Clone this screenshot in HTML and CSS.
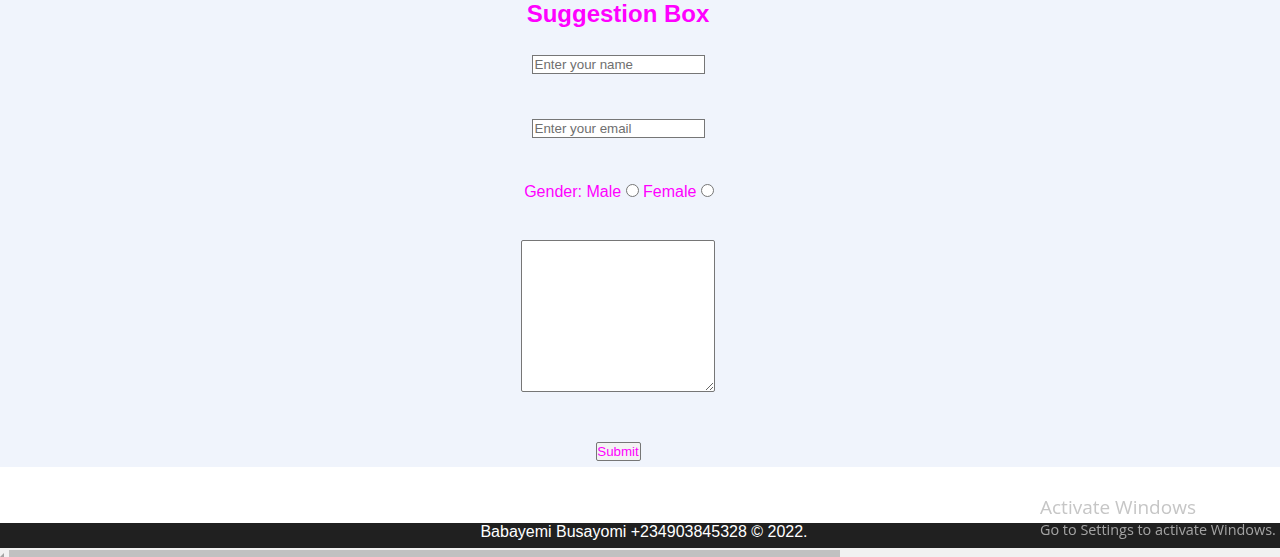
FILE: index.html
```html
<!DOCTYPE html>
<html lang="en">
<head>
<meta charset="utf-8">
<title>Suggestion Box</title>
<link rel="stylesheet" href="styles.css">
</head>
<body>
<main class="main">
  <form class="form">
    <h2 class="title">Suggestion Box</h2>
    <input class="field field-first" type="text" placeholder="Enter your name">
    <input class="field field-second" type="email" placeholder="Enter your email">
    <div class="gender">Gender: Male <span class="radio"></span> Female <span class="radio"></span></div>
    <textarea class="message"></textarea>
    <button class="submit" type="button">Submit</button>
  </form>
</main>
<div class="gap"></div>
<footer class="footer">Babayemi Busayomi +234903845328 © 2022.</footer>
<div class="scrollbar">
  <span class="arrow"></span>
  <span class="thumb"></span>
</div>
<div class="watermark">
  <div class="wm-title">Activate Windows</div>
  <div class="wm-sub">Go to Settings to activate Windows.</div>
</div>
</body>
</html>
```
FILE: styles.css
```css
html, body {
  margin: 0;
  padding: 0;
}
body {
  font-family: "Liberation Sans", Arial, sans-serif;
  background: #ffffff;
  height: 557px;
  overflow: hidden;
}
.main {
  background: #f0f4fc;
  height: 467px;
}
.form {
  width: 1236px;
  display: flex;
  flex-direction: column;
  align-items: center;
}
.title {
  margin: 0;
  font-size: 24px;
  line-height: 28px;
  font-weight: bold;
  color: #ff00ff;
}
.field {
  box-sizing: border-box;
  width: 173px;
  height: 19px;
  border: 1px solid #767676;
  background: #ffffff;
  padding: 0 2px;
  font-family: "Liberation Sans", Arial, sans-serif;
  font-size: 13.333px;
  margin: 0;
  outline: none;
}
.field::placeholder {
  color: #6f6f6f;
}
.field-first {
  margin-top: 27px;
}
.field-second {
  margin-top: 45px;
}
.gender {
  margin-top: 45px;
  margin-left: 2px;
  font-size: 16px;
  line-height: 18px;
  color: #ff00ff;
  display: flex;
  align-items: center;
  white-space: pre;
}
.radio {
  display: inline-block;
  box-sizing: border-box;
  width: 13px;
  height: 13px;
  border: 1px solid #767676;
  border-radius: 50%;
  background: #ffffff;
  margin: -3px 0 0 0;
}
.message {
  box-sizing: border-box;
  margin-top: 39px;
  width: 194px;
  height: 152px;
  border: 1px solid #767676;
  border-radius: 2px;
  background: #ffffff;
  resize: both;
  outline: none;
}
.submit {
  box-sizing: border-box;
  margin-top: 50px;
  height: 19px;
  width: 45px;
  padding: 0;
  border: 1px solid #767676;
  border-radius: 2px;
  background: #f3f3f3;
  color: #ff00ff;
  font-family: "Liberation Sans", Arial, sans-serif;
  font-size: 13.333px;
  line-height: 17px;
}
.gap {
  height: 56px;
}
.footer {
  height: 25px;
  background: #202020;
  color: #ffffff;
  font-size: 16px;
  line-height: 17px;
  text-align: center;
  padding-left: 8px;
  box-sizing: border-box;
}
.scrollbar {
  height: 9px;
  background: #f1f1f1;
  display: flex;
  align-items: flex-start;
}
.arrow {
  width: 0;
  height: 0;
  margin: 5px 0 0 0;
  border-top: 4px solid transparent;
  border-right: 4px solid #a3a3a3;
  border-bottom: 0 solid transparent;
}
.thumb {
  margin-left: 5px;
  margin-top: 2px;
  width: 831px;
  height: 7px;
  background: #c1c1c1;
}
.watermark {
  position: fixed;
  left: 1040px;
  top: 494px;
  font-family: "Open Sans", "Noto Sans", sans-serif;
  pointer-events: none;
}
.wm-title {
  font-size: 19px;
  line-height: 26px;
  color: #c6c6c6;
}
.wm-sub {
  font-size: 14.4px;
  line-height: 19px;
  color: #a3a3a3;
}
```
